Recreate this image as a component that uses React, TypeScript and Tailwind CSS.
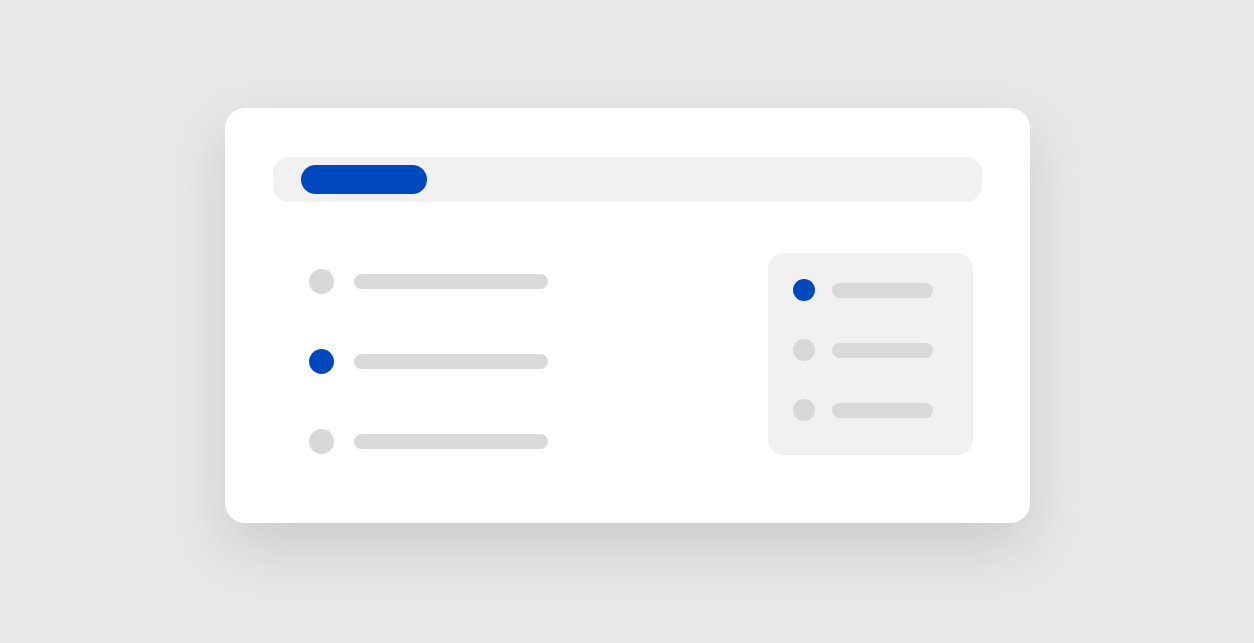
export default function App() {
  const leftRows = [false, true, false]
  const rightRows = [true, false, false]

  return (
    <div className="min-h-[643px] w-full bg-[#e8e8e8] flex justify-center pt-[108px]">
      {/* Card */}
      <div className="w-[805px] h-[415px] bg-white rounded-[20px] shadow-[0_24px_60px_rgba(0,0,0,0.13)] px-[48px] pt-[49px]">
        {/* Top tab bar */}
        <div className="h-[45px] rounded-[16px] bg-[#f1f1f1] pl-[28px] pt-[8px]">
          <div className="w-[126px] h-[29px] rounded-full bg-[#0048bd]" />
        </div>

        <div className="mt-[51px] flex justify-between">
          {/* Left list */}
          <div className="pl-[36px] pt-[16px] flex flex-col gap-[55px]">
            {leftRows.map((active, i) => (
              <div key={i} className="flex items-center gap-[20px]">
                <div className={active ? 'w-[25px] h-[25px] rounded-full bg-[#0048bd]' : 'w-[25px] h-[25px] rounded-full bg-[#d8d8d8]'} />
                <div className="w-[194px] h-[15px] rounded-full bg-[#d9d9d9]" />
              </div>
            ))}
          </div>

          {/* Right panel */}
          <div className="mr-[9px] w-[205px] h-[202px] rounded-[16px] bg-[#f1f1f1] pl-[25px] pt-[26px] flex flex-col gap-[38px]">
            {rightRows.map((active, i) => (
              <div key={i} className="flex items-center gap-[17px]">
                <div className={active ? 'w-[22px] h-[22px] rounded-full bg-[#0048bd]' : 'w-[22px] h-[22px] rounded-full bg-[#d8d8d8]'} />
                <div className="w-[101px] h-[15px] rounded-full bg-[#d9d9d9]" />
              </div>
            ))}
          </div>
        </div>
      </div>
    </div>
  )
}
